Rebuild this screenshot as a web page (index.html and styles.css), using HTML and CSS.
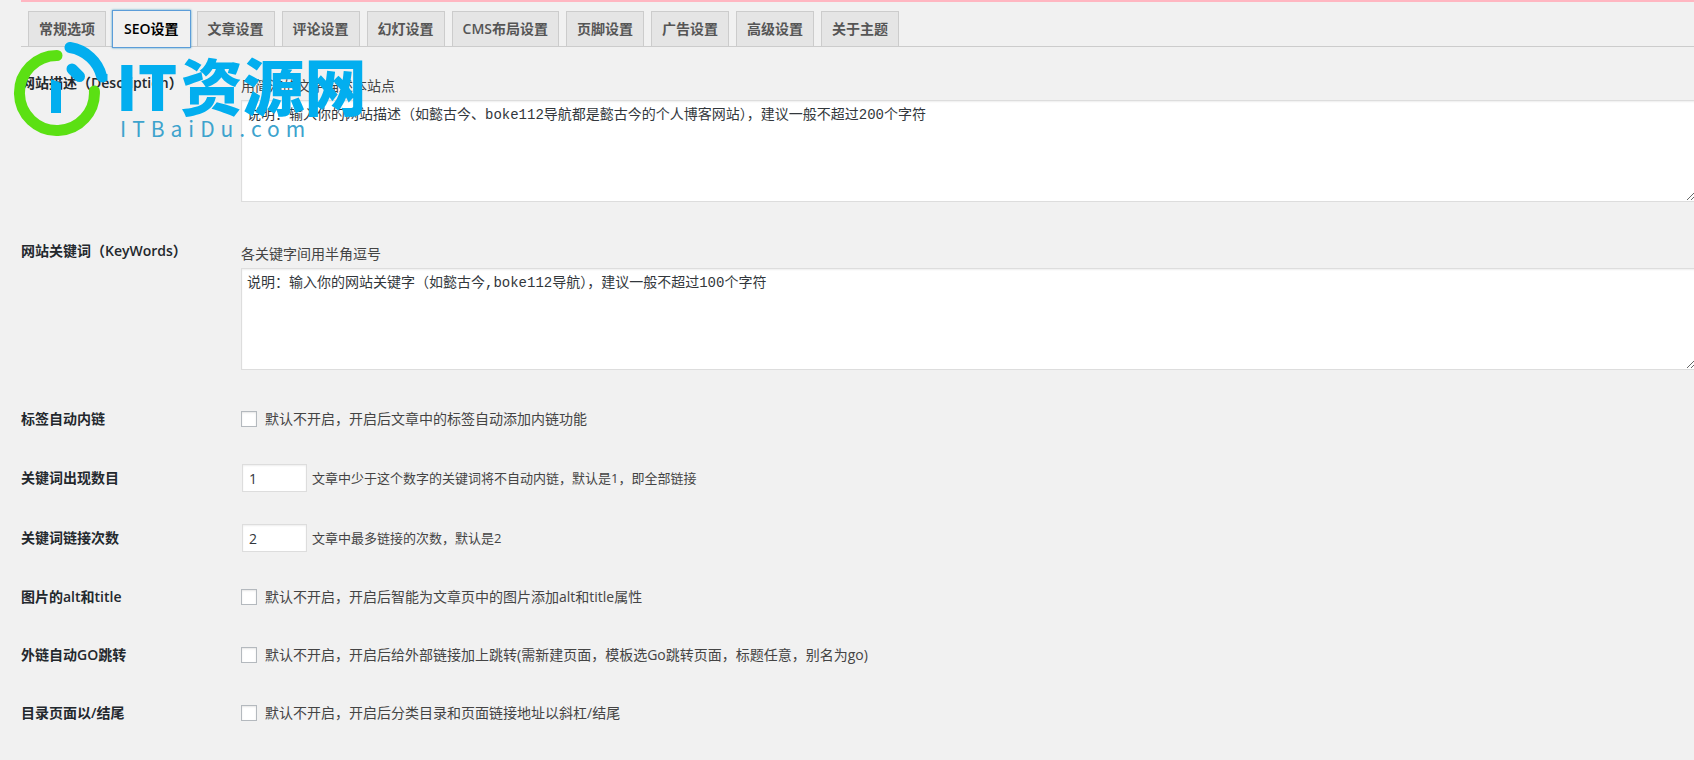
FILE: index.html
```html
<!DOCTYPE html>
<html lang="zh-CN">
<head>
<meta charset="utf-8">
<title>SEO设置</title>
<link rel="stylesheet" href="styles.css">
</head>
<body>
<main class="wrap">
  <nav class="tabs">
    <a class="tab" href="#general">常规选项</a>
    <a class="tab tab-active" href="#seo">SEO设置</a>
    <a class="tab" href="#post">文章设置</a>
    <a class="tab" href="#comment">评论设置</a>
    <a class="tab" href="#slide">幻灯设置</a>
    <a class="tab" href="#cms">CMS布局设置</a>
    <a class="tab" href="#footer">页脚设置</a>
    <a class="tab" href="#ads">广告设置</a>
    <a class="tab" href="#advanced">高级设置</a>
    <a class="tab" href="#about">关于主题</a>
  </nav>
  <form class="form">
    <div class="row row-text">
      <label class="name" for="desc">网站描述（Description）</label>
      <div class="field">
        <p class="hint">用简洁的文字描述本站点</p>
        <textarea class="area" id="desc">说明：输入你的网站描述（如懿古今、boke112导航都是懿古今的个人博客网站），建议一般不超过200个字符</textarea>
      </div>
    </div>
    <div class="row row-text">
      <label class="name" for="keys">网站关键词（KeyWords）</label>
      <div class="field">
        <p class="hint">各关键字间用半角逗号</p>
        <textarea class="area" id="keys">说明：输入你的网站关键字（如懿古今,boke112导航），建议一般不超过100个字符</textarea>
      </div>
    </div>
    <div class="row">
      <span class="name">标签自动内链</span>
      <label class="check"><input class="box" type="checkbox">默认不开启，开启后文章中的标签自动添加内链功能</label>
    </div>
    <div class="row row-number">
      <label class="name" for="count">关键词出现数目</label>
      <div class="number"><input class="num" id="count" type="text" value="1"><span>文章中少于这个数字的关键词将不自动内链，默认是1，即全部链接</span></div>
    </div>
    <div class="row row-number">
      <label class="name" for="times">关键词链接次数</label>
      <div class="number"><input class="num" id="times" type="text" value="2"><span>文章中最多链接的次数，默认是2</span></div>
    </div>
    <div class="row">
      <span class="name">图片的alt和title</span>
      <label class="check"><input class="box" type="checkbox">默认不开启，开启后智能为文章页中的图片添加alt和title属性</label>
    </div>
    <div class="row">
      <span class="name">外链自动GO跳转</span>
      <label class="check"><input class="box" type="checkbox">默认不开启，开启后给外部链接加上跳转(需新建页面，模板选Go跳转页面，标题任意，别名为go)</label>
    </div>
    <div class="row">
      <span class="name">目录页面以/结尾</span>
      <label class="check"><input class="box" type="checkbox">默认不开启，开启后分类目录和页面链接地址以斜杠/结尾</label>
    </div>
  </form>
</main>
<div class="logo">
  <svg class="logo-mark" viewBox="0 0 96 98" width="96" height="98" fill="none" stroke-width="11" stroke-linecap="round" aria-hidden="true">
    <path stroke="#5be013" d="M45 17.500A37.500 37.500 0 1 0 82.400 53"/>
    <path stroke="#02aeef" d="M58 9.500C74 12 86 24 89.500 38"/>
    <path stroke="#02aeef" d="M60 31L67.500 38.500"/>
    <path fill="#02aeef" d="M39 41L49 45V75H39ZM84 36L95.500 36V42Q90 47 86 42Z"/>
  </svg>
  <div class="logo-words">
    <div class="logo-name"><span>IT</span><span>资源网</span></div>
    <div class="logo-site">ITBaiDu.com</div>
  </div>
</div>
</body>
</html>
```
FILE: styles.css
```css
* { box-sizing: border-box; }
body {
  margin: 0;
  background: #f1f1f1;
  color: #444;
  font: 14px/20px "Open Sans", "Noto Sans CJK SC", sans-serif;
  overflow-x: hidden;
}
.wrap {
  margin-left: 21px;
  border-top: 2px solid #ffb6c1;
}
.tabs {
  display: flex;
  gap: 7px;
  padding: 9px 7px 0;
  border-bottom: 1px solid #ccc;
}
.tab {
  padding: 7px 10px;
  border: 1px solid #ccc;
  border-bottom: 0;
  background: #e5e5e5;
  color: #555;
  font-weight: 600;
  text-decoration: none;
}
.tab-active {
  margin-bottom: -1px;
  background: #f1f1f1;
  border-color: #f1f1f1;
  color: #000;
  box-shadow: 0 0 0 1px #5b9dd9, 0 0 2px 1px rgba(30, 140, 190, .8);
}
.form { padding-top: 7px; }
.row {
  display: flex;
  align-items: center;
  min-height: 58px;
}
.row-number { min-height: 60px; }
.row-text {
  align-items: flex-start;
  padding: 20px 0;
}
.name {
  flex: none;
  width: 220px;
  color: #23282d;
  font-weight: 600;
  line-height: 18px;
}
.field { flex: 1; }
.hint {
  margin: 0 0 2px;
  line-height: 24px;
}
.area {
  display: block;
  width: calc(100% + 2px);
  height: 102px;
  padding: 2px 5px;
  border: 1px solid #ddd;
  background: #fff;
  color: #32373c;
  box-shadow: inset 0 1px 2px rgba(0, 0, 0, .07);
  font: 14px/24px "Liberation Mono", "Noto Sans CJK SC", monospace;
  resize: both;
}
.check {
  display: flex;
  align-items: center;
  gap: 8px;
}
.box {
  appearance: none;
  width: 16px;
  height: 16px;
  margin: 0;
  border: 1px solid #b4b9be;
  background: #fff;
  box-shadow: inset 0 1px 2px rgba(0, 0, 0, .1);
}
.number {
  display: flex;
  align-items: center;
  gap: 5px;
  margin-left: 1px;
  font-size: 13px;
}
.num {
  width: 65px;
  height: 28px;
  padding: 3px 6px;
  border: 1px solid #ddd;
  background: #fff;
  color: #32373c;
  box-shadow: inset 0 1px 2px rgba(0, 0, 0, .07);
  font: 14px/20px "Open Sans", "Noto Sans CJK SC", sans-serif;
}
.logo {
  position: absolute;
  top: 38px;
  left: 12px;
  display: flex;
  gap: 8px;
  pointer-events: none;
}
.logo-words { padding-top: 16px; }
.logo-name {
  display: flex;
  gap: 3px;
  color: #02aeef;
  font: 900 62px/60px "Noto Sans CJK SC", sans-serif;
}
.logo-site {
  padding-left: 4px;
  color: #3da3cd;
  font: 21px/28px "Noto Sans CJK SC", sans-serif;
  letter-spacing: 6px;
}
```
